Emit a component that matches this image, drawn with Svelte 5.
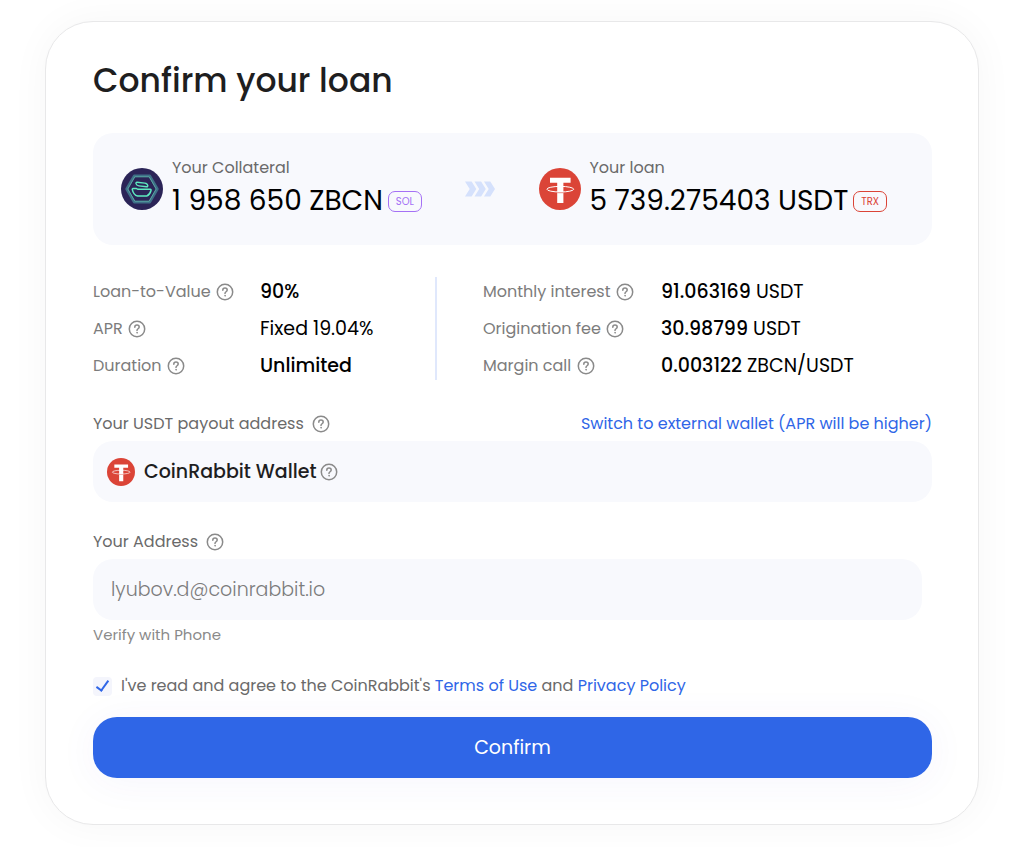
<script lang="ts">
  let address = $state('')
  let agreed = $state(true)

  const terms = [
    { label: 'Loan-to-Value', value: '90%', unit: '' },
    { label: 'APR', value: '', unit: 'Fixed 19.04%' },
    { label: 'Duration', value: 'Unlimited', unit: '' },
  ]

  const costs = [
    { label: 'Monthly interest', value: '91.063169', unit: 'USDT' },
    { label: 'Origination fee', value: '30.98799', unit: 'USDT' },
    { label: 'Margin call', value: '0.003122', unit: 'ZBCN/USDT' },
  ]
</script>

{#snippet help(topic: string)}
  <button type="button" class="help" aria-label="About {topic}">
    <svg viewBox="0 0 18 18" width="18" height="18" fill="none" stroke="currentColor" stroke-width="1.5" stroke-linecap="round">
      <circle cx="9" cy="9" r="7.7" />
      <path d="M6.8 7.2c0-1.3 1-2.1 2.2-2.1s2.2.8 2.2 2c0 1.6-2.2 1.700-2.200 3.300" />
      <circle cx="9" cy="12.8" r=".3" stroke-width="1" />
    </svg>
  </button>
{/snippet}

{#snippet tether()}
  <svg class="coin" viewBox="0 0 42 42" aria-hidden="true">
    <circle cx="21" cy="21" r="21" fill="#db4437" />
    <path d="M11 9.8h20.600v5h-7.200v20.100h-6.200V14.800H11z" fill="#fff" />
    <ellipse cx="21.300" cy="21.200" rx="13.400" ry="2.800" fill="none" stroke="#fff" stroke-width="1" />
    <path d="M18.200 24.700h6.200" stroke="#db4437" stroke-width=".6" />
  </svg>
{/snippet}

{#snippet details(rows: typeof terms)}
  <dl>
    {#each rows as row}
      <div class="row">
        <dt>{row.label} {@render help(row.label)}</dt>
        <dd>{#if row.value}<strong>{row.value}</strong>{/if} {row.unit}</dd>
      </div>
    {/each}
  </dl>
{/snippet}

<form class="card" onsubmit={(e) => e.preventDefault()}>
  <h1>Confirm your loan</h1>

  <section class="summary">
    <div class="asset">
      <svg class="coin" viewBox="0 0 42 42" aria-hidden="true">
        <circle cx="21" cy="21" r="21" fill="#2b2457" />
        <g fill="none" stroke-linejoin="round">
          <path d="M13.200 7.800h15.600L36.400 21l-7.600 13.200H13.200L5.600 21z" stroke="#3f6f87" stroke-width="2.600" />
          <path d="M13.800 8.800h14.400L35.200 21l-7 12.200H13.800L6.800 21z" stroke="#58a7a2" stroke-width="1" />
          <path d="M16 14.300l7.800.8c1.600.2 2.800 1.300 3 2.600.1.800-.5 1.200-1.300 1.100l-7.600-.9c-1.500-.2-2.600-1-2.900-2.200-.2-.8.200-1.400 1-1.400z" stroke="#5eeac0" stroke-width="1.400" />
          <path d="M12 20.600h3.600l1.400.7h12.300c.6 0 .9.600.7 1.200-.6 2.500-2.300 4.700-4.400 5.600h-9c-2.700-.7-4.600-3.500-5.300-6.500-.1-.6.200-1 .7-1z" stroke="#5eeac0" stroke-width="1.500" />
        </g>
      </svg>
      <div class="sum">
        <p class="caption">Your Collateral</p>
        <p class="amount">1 958 650 ZBCN <span class="badge sol">SOL</span></p>
      </div>
    </div>
    <svg class="arrows" viewBox="0 0 30 16" width="30" height="16" fill="#d5e1fc" aria-hidden="true">
      <path d="M0 .5h6.600l4.700 7.500-4.700 7.500H0L4.700 8z" />
      <path d="M9.500.5h6.600l4.700 7.500-4.700 7.500H9.500L14.200 8z" />
      <path d="M19 .5h6.300L30 8l-4.700 7.500H19L23.700 8z" />
    </svg>
    <div class="asset">
      {@render tether()}
      <div class="sum">
        <p class="caption">Your loan</p>
        <p class="amount">5 739.275403 USDT <span class="badge trx">TRX</span></p>
      </div>
    </div>
  </section>

  <section class="details">
    {@render details(terms)}
    {@render details(costs)}
  </section>

  <section class="field">
    <div class="heading">
      <span>Your USDT payout address {@render help('payout address')}</span>
      <a href="#external">Switch to external wallet (APR will be higher)</a>
    </div>
    <div class="wallet">
      {@render tether()}
      <span>CoinRabbit Wallet</span>
      {@render help('CoinRabbit Wallet')}
    </div>
  </section>

  <section class="field">
    <div class="heading">
      <span><label for="address">Your Address</label> {@render help('your address')}</span>
    </div>
    <input id="address" class="address" type="text" placeholder="lyubov.d@coinrabbit.io" bind:value={address} />
    <p class="hint">Verify with Phone</p>
  </section>

  <div class="agree">
    <input id="agree" type="checkbox" bind:checked={agreed} />
    <p>
      <label for="agree">I've read and agree to the CoinRabbit's</label>
      <a href="#terms">Terms of Use</a> and <a href="#privacy">Privacy Policy</a>
    </p>
  </div>

  <button type="submit" class="confirm">Confirm</button>
</form>

<style>
  :global(body) {
    background: #fff;
  }
  .card {
    box-sizing: border-box;
    margin: 21px 45px 22px;
    padding: 35px 46px 46px 47px;
    border: 1px solid #e8e8e9;
    border-radius: 48px;
    background: #fff;
    box-shadow: 0 0 40px rgba(0, 0, 0, 0.04);
    color: #6a6a6a;
    font-family: Poppins, Inter, sans-serif;
    font-size: 16px;
    font-weight: 400;
    line-height: 26px;
  }
  h1, p, dl, dd {
    margin: 0;
  }
  h1 {
    color: #1e1e1f;
    font-size: 33px;
    font-weight: 500;
    line-height: 48px;
  }
  a {
    color: #2f66e7;
    text-decoration: none;
  }
  a:hover { text-decoration: underline; }
  .coin {
    flex: none;
    width: 42px;
    height: 42px;
  }

  .summary {
    display: flex;
    align-items: center;
    justify-content: space-between;
    margin-top: 28px;
    padding: 20px 45px 20px 28px;
    border-radius: 20px;
    background: #f8f9fd;
  }
  .asset {
    display: flex;
    align-items: center;
    gap: 9px;
  }
  .sum { padding-bottom: 6px; }
  .caption { line-height: 30px; }
  .amount {
    display: flex;
    align-items: center;
    gap: 5px;
    color: #000;
    font-size: 28px;
    line-height: 36px;
    white-space: nowrap;
  }
  .badge {
    padding: 0 7px;
    border: 1px solid;
    border-radius: 7px;
    font-size: 10px;
    line-height: 19px;
  }
  .sol { color: #a571f5; }
  .trx { color: #db4437; }

  .details {
    display: flex;
    margin-top: 28px;
  }
  dl:first-child {
    position: relative;
    flex: 0 0 390px;
  }
  dl:first-child::after {
    content: '';
    position: absolute;
    top: 4px;
    bottom: 4px;
    right: 46px;
    width: 2px;
    background: #e0e8fc;
  }
  .row {
    display: flex;
    line-height: 37px;
  }
  dt {
    width: 167px;
    color: #7c7c7c;
  }
  dl:last-child dt { width: 178px; }
  dd {
    color: #000;
    font-size: 19px;
  }
  strong { font-weight: 500; }
  .help {
    width: 18px;
    height: 18px;
    margin-left: 1px;
    padding: 0;
    border: 0;
    background: none;
    color: #8a8a8a;
    vertical-align: -4px;
    cursor: pointer;
  }
  .help svg { display: block; }

  .field { margin-top: 27px; }
  .heading {
    display: flex;
    justify-content: space-between;
    margin-bottom: 4px;
  }
  .heading .help { margin-left: 4px; }
  .wallet {
    display: flex;
    align-items: center;
    height: 61px;
    box-sizing: border-box;
    padding: 0 14px;
    border-radius: 20px;
    background: #f8f9fd;
    color: #1e1e1f;
    font-size: 19px;
    font-weight: 500;
  }
  .wallet .coin {
    width: 28px;
    height: 28px;
  }
  .wallet span { margin: 0 2px 0 9px; }
  .address {
    display: block;
    width: calc(100% - 10px);
    height: 61px;
    box-sizing: border-box;
    padding: 0 18px;
    border: 0;
    border-radius: 20px;
    background: #f8f9fd;
    color: #1e1e1f;
    font: inherit;
    font-size: 19px;
    font-weight: 300;
  }
  .address::placeholder {
    color: #7c7c7c;
    opacity: 1;
  }
  .hint {
    margin-top: 4px;
    color: #8a8a8a;
    font-size: 15px;
    line-height: 22px;
  }

  .agree {
    display: flex;
    align-items: center;
    gap: 9px;
    margin-top: 27px;
  }
  .agree input {
    display: grid;
    place-items: center;
    flex: none;
    appearance: none;
    width: 19px;
    height: 19px;
    margin: 0;
    border-radius: 4px;
    background: #f4f5fc;
  }
  .agree input:checked::before {
    content: '';
    width: 5px;
    height: 11px;
    border: solid #2f66e7;
    border-width: 0 2px 2px 0;
    transform: translateY(-2px) rotate(36deg);
  }
  .confirm {
    display: block;
    width: 100%;
    height: 61px;
    margin-top: 18px;
    border: 0;
    border-radius: 24px;
    background: #2f66e7;
    box-shadow: 0 4px 40px rgba(80, 60, 200, 0.05);
    color: #fff;
    font: inherit;
    font-size: 19px;
    cursor: pointer;
  }
  .confirm:hover { background: #2759d3; }
</style>
